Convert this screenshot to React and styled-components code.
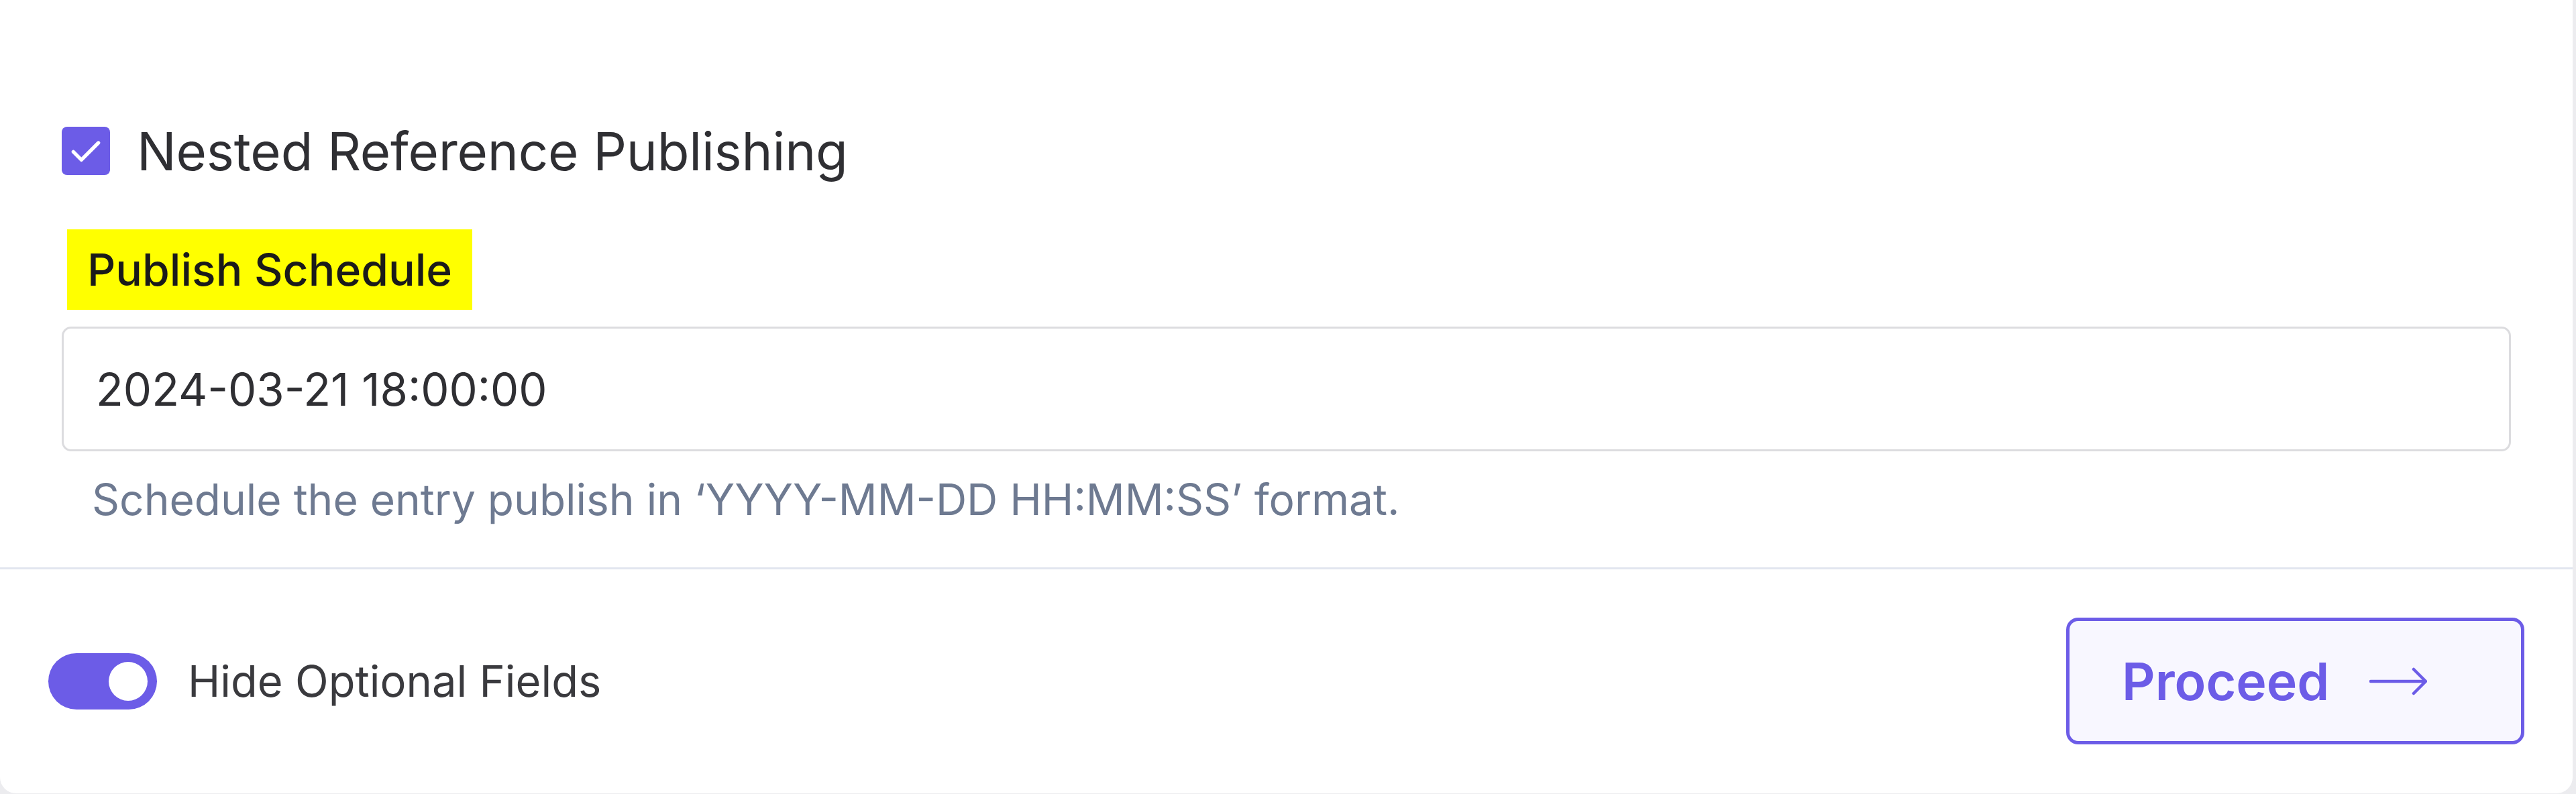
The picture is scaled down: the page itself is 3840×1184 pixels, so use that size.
import React from 'react';
import styled, { createGlobalStyle } from 'styled-components';

const GlobalStyle = createGlobalStyle`
  html, body {
    margin: 0;
    padding: 0;
    background: #ececef;
    font-family: Inter, "Noto Sans", "Liberation Sans", sans-serif;
  }
`;

const Card = styled.div`
  width: calc(100% - 5px);
  height: 1183px;
  display: flex;
  flex-direction: column;
  background: #fff;
  border-radius: 0 0 24px 24px;
  box-sizing: border-box;
`;

const Body = styled.div`
  padding: 189px 92px 58px;
  display: flex;
  flex-direction: column;
  align-items: flex-start;
`;

const CheckRow = styled.label`
  display: flex;
  align-items: center;
  gap: 40px;
  height: 72px;
  font-size: 78px;
  color: #2f2f33;
  letter-spacing: -0.2px;
`;

const Box = styled.span`
  width: 72px;
  height: 72px;
  border-radius: 8px;
  background: ${p => (p.checked ? '#6c5ce7' : '#fff')};
  border: ${p => (p.checked ? 'none' : '3px solid #c4c8d4')};
  display: flex;
  align-items: center;
  justify-content: center;
  flex-shrink: 0;
`;

const FieldLabel = styled.div`
  margin: 81px 0 0 8px;
  padding: 0 30px;
  height: 120px;
  display: flex;
  align-items: center;
  background: #ffff00;
  color: #1a1a1a;
  font-size: 66px;
  font-weight: 500;
`;

const Input = styled.div`
  margin-top: 25px;
  width: 100%;
  height: 186px;
  box-sizing: border-box;
  border: 3px solid #dcdcdf;
  border-radius: 14px;
  padding: 0 48px;
  display: flex;
  align-items: center;
  font-size: 67px;
  color: #2f2f33;
`;

const Help = styled.div`
  margin-top: 28px;
  padding-left: 45px;
  font-size: 64px;
  line-height: 87px;
  color: #6e7a91;
`;

const Footer = styled.div`
  border-top: 3px solid #e2e6ef;
  padding: 72px;
  display: flex;
  align-items: center;
  justify-content: space-between;
`;

const ToggleRow = styled.div`
  display: flex;
  align-items: center;
  gap: 46px;
  font-size: 65px;
  color: #3a3a3e;
`;

const Track = styled.span`
  width: 162px;
  height: 84px;
  border-radius: 42px;
  background: ${p => (p.on ? '#6c5ce7' : '#c9ccd6')};
  display: flex;
  align-items: center;
  justify-content: ${p => (p.on ? 'flex-end' : 'flex-start')};
  padding: 0 14px;
  box-sizing: border-box;
`;

const Knob = styled.span`
  width: 58px;
  height: 58px;
  border-radius: 50%;
  background: #fff;
`;

const ProceedButton = styled.button`
  width: 683px;
  height: 189px;
  box-sizing: border-box;
  border: 5px solid #6c5ce7;
  border-radius: 18px;
  background: #f8f7ff;
  color: #6c5ce7;
  font-family: inherit;
  font-size: 77px;
  font-weight: 600;
  display: flex;
  align-items: center;
  gap: 60px;
  padding: 0 0 0 78px;
  cursor: pointer;
`;

const Check = () => (
  <svg width="64" height="64" viewBox="0 0 24 24" fill="none" stroke="#fff" strokeWidth="2" strokeLinecap="round" strokeLinejoin="round">
    <path d="M5 12.5l4.5 4.5L19 7.5" />
  </svg>
);

const Arrow = () => (
  <svg width="86" height="44" viewBox="0 0 86 44" fill="none" stroke="#6c5ce7" strokeWidth="4.5" strokeLinecap="round" strokeLinejoin="round">
    <path d="M2 22h80M66 4l18 18-18 18" />
  </svg>
);

export default function App() {
  return (
    <>
      <GlobalStyle />
      <Card>
        <Body>
          <CheckRow>
            <Box checked>
              <Check />
            </Box>
            Nested Reference Publishing
          </CheckRow>
          <FieldLabel>Publish Schedule</FieldLabel>
          <Input>2024-03-21 18:00:00</Input>
          <Help>Schedule the entry publish in ‘YYYY-MM-DD HH:MM:SS’ format.</Help>
        </Body>
        <Footer>
          <ToggleRow>
            <Track on>
              <Knob />
            </Track>
            Hide Optional Fields
          </ToggleRow>
          <ProceedButton>
            Proceed
            <Arrow />
          </ProceedButton>
        </Footer>
      </Card>
    </>
  );
}
